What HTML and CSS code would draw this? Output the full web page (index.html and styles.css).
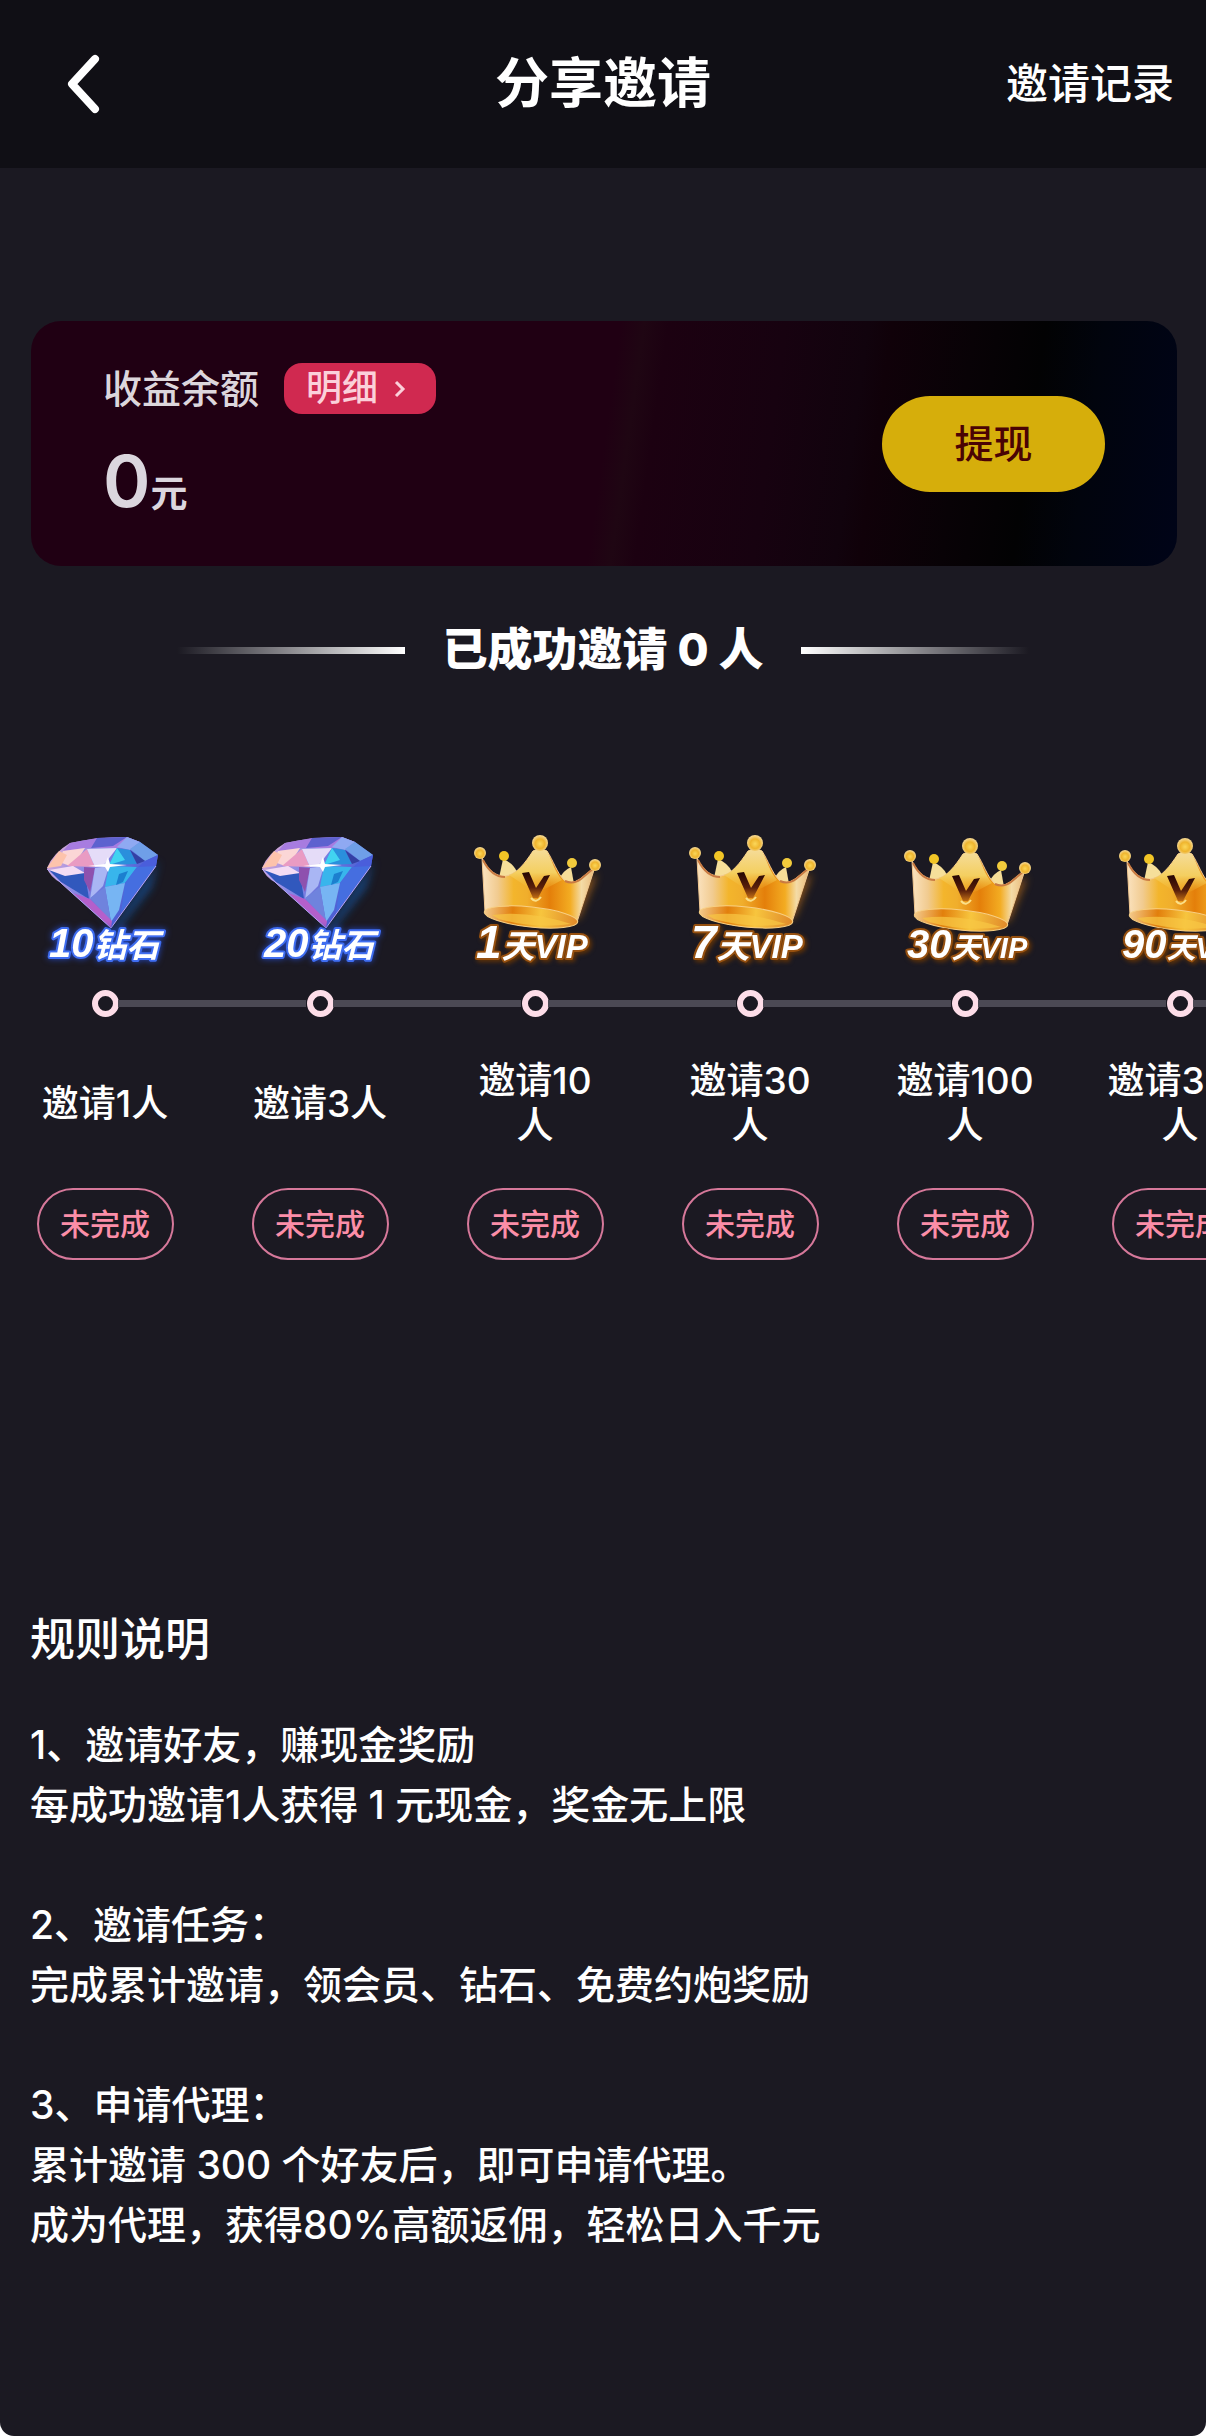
FILE: index.html
```html
<!DOCTYPE html>
<html lang="zh-CN">
<head>
<meta charset="utf-8">
<meta name="viewport" content="width=device-width, initial-scale=1">
<title>分享邀请</title>
<link rel="stylesheet" href="styles.css">
</head>
<body>
<svg class="defs" aria-hidden="true">
  <defs>
    <linearGradient id="gemBase" x1="0" y1="0" x2="1" y2="0.5">
      <stop offset="0" stop-color="#f3b4d2"/><stop offset="0.4" stop-color="#8d8be6"/><stop offset="1" stop-color="#3a53cf"/>
    </linearGradient>
    <linearGradient id="goldBody" x1="0" y1="0" x2="1" y2="0">
      <stop offset="0" stop-color="#fbe3c0"/><stop offset="0.14" stop-color="#f1cb90"/><stop offset="0.28" stop-color="#f3b52c"/>
      <stop offset="0.4" stop-color="#f0ae2c"/><stop offset="0.6" stop-color="#e47f0a"/><stop offset="0.78" stop-color="#f3ac22"/>
      <stop offset="0.88" stop-color="#f4dba6"/><stop offset="1" stop-color="#e9b878"/>
    </linearGradient>
    <linearGradient id="goldRim" x1="0" y1="0" x2="1" y2="0">
      <stop offset="0" stop-color="#f3c98c"/><stop offset="0.3" stop-color="#e27f0c"/><stop offset="0.6" stop-color="#f7c53e"/><stop offset="1" stop-color="#e0892a"/>
    </linearGradient>
    <linearGradient id="goldPeak" x1="0" y1="0" x2="0" y2="1">
      <stop offset="0" stop-color="#f5dc9a"/><stop offset="0.55" stop-color="#f4cf60"/><stop offset="1" stop-color="#f3b52c" stop-opacity="0"/>
    </linearGradient>
    <linearGradient id="vInk" x1="0" y1="0" x2="0" y2="1">
      <stop offset="0" stop-color="#240503"/><stop offset="0.6" stop-color="#5a1f0a"/><stop offset="1" stop-color="#c06d14"/>
    </linearGradient>
    <radialGradient id="ball" cx="0.5" cy="0.55" r="0.5">
      <stop offset="0" stop-color="#fbd75a"/><stop offset="0.6" stop-color="#efb52e"/><stop offset="1" stop-color="#f4d489"/>
    </radialGradient>
    <filter id="soft" x="-30%" y="-30%" width="160%" height="160%"><feGaussianBlur stdDeviation="4"/></filter>

    <g id="gem">
      <path d="M40 50 L78 100 L126 30 L118 58 L82 104Z" fill="#1261b8" opacity="0.6" filter="url(#soft)"/>
      <path d="M14 38 Q20 23 37 13 Q62 7 94 7 L107 12 L125 25 L123 36 L78 98 L28 53 Q17 47 14 38Z" fill="url(#gemBase)"/>
      <path d="M37 13 L64 8 L94 7 L107 12 L90 18 L52 18 L30 21Z" fill="#a77ce0"/>
      <path d="M64 8 L94 7 L80 16 L58 18Z" fill="#5d62cf"/>
      <path d="M94 7 L107 12 L97 20 L84 17Z" fill="#8fa9f2"/>
      <path d="M107 12 L125 25 L112 31 L97 19Z" fill="#6f9fe8"/>
      <path d="M30 21 L52 18 L40 37 L26 32Z" fill="#fbd6d6"/>
      <path d="M14 38 L26 21 L34 25 L28 36Z" fill="#fdc3ac"/>
      <path d="M34 36 L54 19 L62 37Z" fill="#e99bc3"/>
      <path d="M54 19 L84 18 L70 36 L62 37Z" fill="#e5dcf8"/>
      <path d="M84 18 L97 20 L104 34 L76 35Z" fill="#2a8fdc"/>
      <path d="M84 18 L92 30 L76 35Z" fill="#41d3f1"/>
      <path d="M97 20 L112 31 L104 34Z" fill="#3340a4"/>
      <path d="M112 31 L125 25 L123 36 L104 38Z" fill="#4a5edb"/>
      <path d="M16 40 L52 43 L56 69 L28 52Z" fill="#3158bd"/>
      <path d="M16 40 L40 36 L52 43 L32 46Z" fill="#f4dcf4"/>
      <path d="M51 37 L62 38 L57 62 L51 50Z" fill="#8e51ae"/>
      <path d="M62 38 L76 36 L70 56 L57 69Z" fill="#a9b6f4"/>
      <path d="M76 36 L104 37 L92 53 L72 57Z" fill="#38b5ec"/>
      <path d="M104 37 L123 36 L88 83 L92 53Z" fill="#456ee0"/>
      <path d="M72 57 L92 53 L86 80 L78 92Z" fill="#77b5f3"/>
      <path d="M57 68 L72 57 L78 92Z" fill="#6f83dd"/>
      <path d="M40 63 L57 69 L79 91 L78 98Z" fill="#b45fcb"/>
      <path d="M86 44 L95 41 L90 52 L83 55Z" fill="#1c7fcf"/>
      <path d="M55 36 L72 34 L75 27 L77 34 L94 35 L77 37 L75 42 L72 37Z" fill="#fff"/>
      <path d="M14 39 L28 53 L78 98 L123 36" fill="none" stroke="#b6a3f5" stroke-width="1"/>
    </g>

    <g id="crown">
      <path d="M116 88 L134 44 L122 50 L104 88Z" fill="#c77416" opacity="0.7" filter="url(#soft)"/>
      <path d="M36 48 L40 29 Q50 33 54 42 L56 52Z" fill="#f6df9a"/>
      <path d="M96 50 Q99 41 108 37 L111 54Z" fill="#f6dd98"/>
      <path d="M19 28 C25 40 33 47 43 46 C54 44 62 33 70 21 Q77 17 84 21 C90 30 94 43 101 50 Q108 55 117 49 L132 37 L114 92 C96 103 34 96 22 82Z" fill="url(#goldBody)" stroke="#f2c891" stroke-width="1"/>
      <path d="M70 21 Q77 17 84 21 C89 30 92 42 99 50 L84 58 L72 62 L46 45 C56 42 63 32 70 21Z" fill="url(#goldPeak)"/>
      <path d="M20 30 C26 42 34 47 42 47 M102 51 Q110 55 118 49 L131 38" fill="none" stroke="#c97b43" stroke-width="2"/>
      <ellipse cx="68" cy="87" rx="47" ry="10" transform="rotate(6 68 87)" fill="url(#goldRim)" stroke="#f8cf83" stroke-width="1"/>
      <path d="M29 85 Q66 80 108 94 Q70 99 36 89Z" fill="#f8c844" opacity="0.7"/>
      <path d="M59 43 L66 42 L73 58 L81 46 L87 45 L75 68 L70 68Z" fill="url(#vInk)"/>
      <path d="M68 68 Q73 74 78 67" fill="none" stroke="#fbe08a" stroke-width="2"/>
      <circle cx="17" cy="23" r="6" fill="url(#ball)"/>
      <circle cx="41" cy="26" r="5" fill="#f2c526"/>
      <circle cx="77" cy="13" r="8" fill="url(#ball)"/>
      <circle cx="109" cy="33" r="5" fill="#f2cb3c"/>
      <circle cx="132" cy="35" r="6" fill="url(#ball)"/>
    </g>
  </defs>
</svg>

<div class="page">
  <header class="topbar">
    <button class="back" type="button" aria-label="返回">
      <svg viewBox="0 0 40 64" class="back-icon" aria-hidden="true"><path d="M33 7 L10 32 L33 57"/></svg>
    </button>
    <h1 class="topbar-title">分享邀请</h1>
    <a class="topbar-link" href="#records">邀请记录</a>
  </header>

  <main>
    <section class="balance">
      <div>
        <div class="balance-head">
          <span class="balance-label">收益余额</span>
          <a class="detail" href="#detail">明细
            <svg viewBox="0 0 12 20" class="detail-icon" aria-hidden="true"><path d="M2 3 L9 10 L2 17"/></svg>
          </a>
        </div>
        <p class="amount">0<span class="unit">元</span></p>
      </div>
      <button class="withdraw" type="button">提现</button>
    </section>

    <h2 class="invited">已成功邀请 0 人</h2>

    <ol class="steps">
      <li class="step">
        <svg class="reward" viewBox="0 0 144 140"><use href="#gem"/><text class="gem-text" x="16" y="127"><tspan class="n40">10</tspan><tspan class="n33">钻石</tspan></text></svg>
        <span class="dot"></span>
        <p class="goal">邀请1人</p>
        <button class="status" type="button">未完成</button>
      </li>
      <li class="step">
        <svg class="reward" viewBox="0 0 144 140"><use href="#gem"/><text class="gem-text" x="16" y="127"><tspan class="n40">20</tspan><tspan class="n33">钻石</tspan></text></svg>
        <span class="dot"></span>
        <p class="goal">邀请3人</p>
        <button class="status" type="button">未完成</button>
      </li>
      <li class="step">
        <svg class="reward" viewBox="0 0 144 140"><use href="#crown"/><text class="vip-text" x="13" y="128"><tspan class="n46">1</tspan><tspan class="n33">天VIP</tspan></text></svg>
        <span class="dot"></span>
        <p class="goal">邀请10人</p>
        <button class="status" type="button">未完成</button>
      </li>
      <li class="step">
        <svg class="reward" viewBox="0 0 144 140"><use href="#crown"/><text class="vip-text" x="13" y="128"><tspan class="n46">7</tspan><tspan class="n33">天VIP</tspan></text></svg>
        <span class="dot"></span>
        <p class="goal">邀请30人</p>
        <button class="status" type="button">未完成</button>
      </li>
      <li class="step">
        <svg class="reward" viewBox="0 0 144 140"><use href="#crown" y="3"/><text class="vip-text" x="14" y="128"><tspan class="n40">30</tspan><tspan class="n29">天VIP</tspan></text></svg>
        <span class="dot"></span>
        <p class="goal">邀请100人</p>
        <button class="status" type="button">未完成</button>
      </li>
      <li class="step">
        <svg class="reward" viewBox="0 0 144 140"><use href="#crown" y="3"/><text class="vip-text" x="14" y="128"><tspan class="n40">90</tspan><tspan class="n29">天VIP</tspan></text></svg>
        <span class="dot"></span>
        <p class="goal">邀请300人</p>
        <button class="status" type="button">未完成</button>
      </li>
    </ol>

    <section class="rules">
      <h2 class="rules-title">规则说明</h2>
      <p>1、邀请好友，赚现金奖励<br>每成功邀请1人获得 1 元现金，奖金无上限</p>
      <p>2、邀请任务：<br>完成累计邀请，领会员、钻石、免费约炮奖励</p>
      <p>3、申请代理：<br>累计邀请 300 个好友后，即可申请代理。<br>成为代理，获得80%高额返佣，轻松日入千元</p>
    </section>
  </main>
</div>
</body>
</html>
```
FILE: styles.css
```css
* {
  box-sizing: border-box;
}

body {
  margin: 0;
  background: #fff;
  color: #fff;
  font-family: Inter, "Noto Sans CJK SC", sans-serif;
  font-size: 39px;
  font-weight: 500;
  line-height: 60px;
}

h1, h2, p, ol {
  margin: 0;
  padding: 0;
}

button {
  border: 0;
  padding: 0;
  background: none;
  color: inherit;
  font: inherit;
}

a {
  color: inherit;
  text-decoration: none;
}

.defs {
  position: absolute;
  width: 0;
  height: 0;
}

.page {
  min-height: 100vh;
  overflow: hidden;
  background: #1b1922;
  border-radius: 0 0 14px 14px;
}

/* Top bar */
.topbar {
  display: grid;
  grid-template-columns: 1fr auto 1fr;
  align-items: center;
  height: 168px;
  padding: 0 32px;
  background: #100f15;
}

.back {
  justify-self: start;
  display: flex;
  padding: 0 30px;
}

.back-icon {
  width: 40px;
  height: 64px;
  fill: none;
  stroke: #fff;
  stroke-width: 8;
  stroke-linecap: round;
  stroke-linejoin: round;
}

.topbar-title {
  font-size: 54px;
  font-weight: 700;
}

.topbar-link {
  justify-self: end;
  font-size: 42px;
}

/* Balance card */
.balance {
  display: flex;
  align-items: center;
  justify-content: space-between;
  margin: 153px 29px 0 31px;
  padding: 42px 72px;
  border-radius: 30px;
  background: linear-gradient(98deg, #200013 0%, #200013 50%, #1f0613 52%, #1c0111 54%, #170210 64%, #11030d 71%, #100109 73%, #080206 80%, #020203 86%, #01040d 91%, #000418 100%);
}

.balance-head {
  display: flex;
  align-items: center;
  gap: 25px;
  color: #dcd6dc;
}

.balance-label {
  line-height: 51px;
}

.detail {
  display: flex;
  align-items: center;
  gap: 16px;
  padding: 0 30px 0 22px;
  border-radius: 18px;
  background: #d02950;
  color: #fbd0da;
  font-size: 36px;
  line-height: 51px;
}

.detail-icon {
  width: 12px;
  height: 20px;
  fill: none;
  stroke: currentColor;
  stroke-width: 3;
}

.amount {
  display: flex;
  align-items: baseline;
  height: 86px;
  margin-top: 24px;
  color: #dbd6de;
  font-size: 72px;
  font-weight: 600;
  line-height: 86px;
}

.unit {
  font-size: 37px;
  font-weight: 700;
  line-height: 45px;
}

.withdraw {
  width: 223px;
  height: 96px;
  border-radius: 48px;
  background: #d6ae0b;
  color: #4a0304;
}

/* Invited count between two fading rules */
.invited {
  display: flex;
  align-items: center;
  justify-content: center;
  gap: 38px;
  margin-top: 54px;
  font-size: 45px;
  font-weight: 800;
}

.invited::before,
.invited::after {
  content: "";
  width: 228px;
  height: 7px;
  background: linear-gradient(to left, #fff, transparent);
}

.invited::after {
  background: linear-gradient(to right, #fff, transparent);
}

/* Reward track */
.steps {
  display: flex;
  gap: 67px;
  margin-top: 150px;
  padding-left: 31px;
  overflow-x: auto;
  scrollbar-width: none;
  list-style: none;
}

.step {
  position: relative;
  flex: none;
  display: flex;
  flex-direction: column;
  align-items: center;
  width: 148px;
}

.reward {
  width: 144px;
  height: 140px;
  overflow: visible;
  font-family: "Liberation Sans", "Noto Sans CJK SC", sans-serif;
  font-weight: 700;
  font-style: italic;
}

.gem-text,
.vip-text {
  fill: #fff;
  paint-order: stroke;
  stroke-width: 4;
  stroke-linejoin: round;
}

.gem-text {
  stroke: #3f6df0;
  filter: drop-shadow(0 0 3px #2446b8);
}

.vip-text {
  stroke: #96500f;
  filter: drop-shadow(2px 2px 2px #5e3208);
}

.n46 { font-size: 46px; }
.n40 { font-size: 40px; }
.n33 { font-size: 33px; }
.n29 { font-size: 29px; }

.dot {
  width: 27px;
  height: 27px;
  margin-top: 20px;
  border: 6px solid #fddde8;
  border-radius: 50%;
}

.step::after {
  content: "";
  position: absolute;
  top: 170px;
  left: 87px;
  width: 188px;
  height: 7px;
  background: #4b4954;
}

.goal {
  display: flex;
  align-items: center;
  height: 90px;
  margin-top: 41px;
  font-size: 37px;
  line-height: 45px;
  text-align: center;
}

.status {
  width: 137px;
  height: 72px;
  margin-top: 40px;
  border: 2px solid #d6789a;
  border-radius: 36px;
  color: #fb8ea8;
  font-size: 30px;
}

/* Rules */
.rules {
  display: flex;
  flex-direction: column;
  gap: 60px;
  margin-top: 350px;
  padding: 0 30px 90px;
}

.rules-title {
  margin-bottom: -15px;
  font-size: 45px;
  font-weight: 500;
}
```
